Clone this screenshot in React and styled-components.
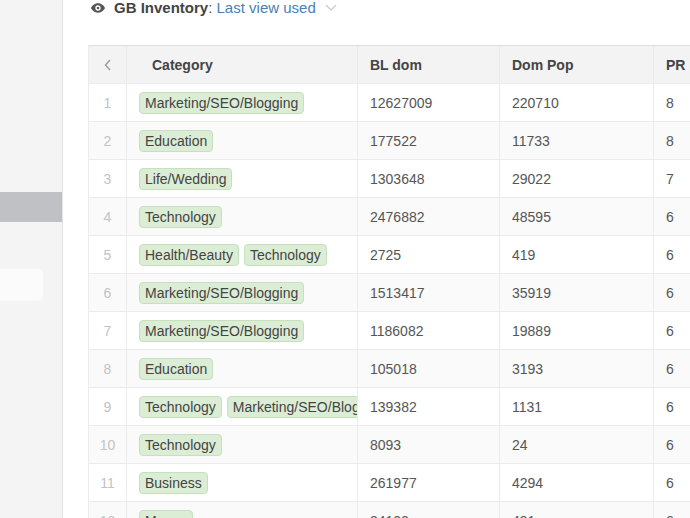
import React from 'react'
import styled, { createGlobalStyle } from 'styled-components'

const Global = createGlobalStyle`
  html, body { margin: 0; padding: 0; background: #fff; overflow: hidden; }
  body { font-family: 'Liberation Sans', Arial, sans-serif; font-size: 14px; color: #555; }
`

const Page = styled.div`
  display: flex;
  width: 690px;
  height: 518px;
  overflow: hidden;
`

const Sidebar = styled.div`
  width: 62px;
  flex: none;
  background: #f4f4f4;
  border-right: 1px solid #e3e3e3;
  display: flex;
  flex-direction: column;
`

const SideBar = styled.div`
  margin-top: 192px;
  height: 30px;
  background: #bfc1c4;
`

const SideBox = styled.div`
  margin-top: 47px;
  width: 43px;
  height: 32px;
  background: #fbfbfb;
  border-radius: 0 5px 5px 0;
`

const Main = styled.div`
  flex: 1;
  padding-left: 25px;
  min-width: 0;
`

const Title = styled.div`
  height: 45px;
  display: flex;
  align-items: flex-start;
  gap: 8px;
  padding-left: 2px;
  font-size: 15px;
  line-height: 16px;
  b { color: #444; }
  span { color: #4a7fb5; }
`

const Table = styled.div`
  border-top: 1px solid #dedede;
  border-left: 1px solid #ececec;
`

const Row = styled.div`
  display: grid;
  grid-template-columns: 38px 231px 142px 154px 60px;
  height: 38px;
  background: ${p => (p.$head ? '#f3f3f3' : p.$even ? '#fafafa' : '#fff')};
  border-bottom: 1px solid #ebebeb;
  box-sizing: border-box;
`

const Cell = styled.div`
  display: flex;
  align-items: center;
  gap: 5px;
  padding-left: ${p => p.$pad ?? 12}px;
  border-right: 1px solid #ebebeb;
  overflow: hidden;
  white-space: nowrap;
  font-weight: ${p => (p.$head ? 'bold' : 'normal')};
  color: ${p => (p.$head ? '#444' : '#555')};
`

const Index = styled(Cell)`
  justify-content: center;
  padding-left: 0;
  color: #c3c3c3;
`

const Tag = styled.span`
  flex: none;
  background: #dcedd6;
  border: 1px solid #c5e0bd;
  border-radius: 4px;
  padding: 2px 5px;
  line-height: 16px;
  color: #444;
`

const rows = [
  [['Marketing/SEO/Blogging'], '12627009', '220710', '8'],
  [['Education'], '177522', '11733', '8'],
  [['Life/Wedding'], '1303648', '29022', '7'],
  [['Technology'], '2476882', '48595', '6'],
  [['Health/Beauty', 'Technology'], '2725', '419', '6'],
  [['Marketing/SEO/Blogging'], '1513417', '35919', '6'],
  [['Marketing/SEO/Blogging'], '1186082', '19889', '6'],
  [['Education'], '105018', '3193', '6'],
  [['Technology', 'Marketing/SEO/Blogging'], '139382', '1131', '6'],
  [['Technology'], '8093', '24', '6'],
  [['Business'], '261977', '4294', '6'],
  [['Money'], '24109', '491', '6'],
]

const Eye = () => (
  <svg width="16" height="16" viewBox="0 0 24 24" fill="#555">
    <path d="M12 5C6.5 5 2.7 9.2 1.5 12c1.2 2.8 5 7 10.5 7s9.3-4.2 10.5-7C21.3 9.2 17.5 5 12 5zm0 11a4 4 0 110-8 4 4 0 010 8z" />
    <circle cx="12" cy="12" r="2" />
  </svg>
)

export default function App() {
  return (
    <Page>
      <Global />
      <Sidebar>
        <SideBar />
        <SideBox />
      </Sidebar>
      <Main>
        <Title>
          <Eye />
          <div><b>GB Inventory</b>: <span>Last view used</span></div>
          <svg width="14" height="16" viewBox="0 0 14 16" fill="none" stroke="#ccc" strokeWidth="1.3">
            <path d="M2 5l5 5 5-5" />
          </svg>
        </Title>
        <Table>
          <Row $head>
            <Index $head>
              <svg width="8" height="12" viewBox="0 0 8 12" fill="none" stroke="#999" strokeWidth="1.4">
                <path d="M6 1L1.5 6 6 11" />
              </svg>
            </Index>
            <Cell $head $pad={25}>Category</Cell>
            <Cell $head>BL dom</Cell>
            <Cell $head>Dom Pop</Cell>
            <Cell $head>PR</Cell>
          </Row>
          {rows.map((r, i) => (
            <Row key={i} $even={i % 2 === 1}>
              <Index>{i + 1}</Index>
              <Cell>{r[0].map(t => <Tag key={t}>{t}</Tag>)}</Cell>
              <Cell>{r[1]}</Cell>
              <Cell>{r[2]}</Cell>
              <Cell>{r[3]}</Cell>
            </Row>
          ))}
        </Table>
      </Main>
    </Page>
  )
}
